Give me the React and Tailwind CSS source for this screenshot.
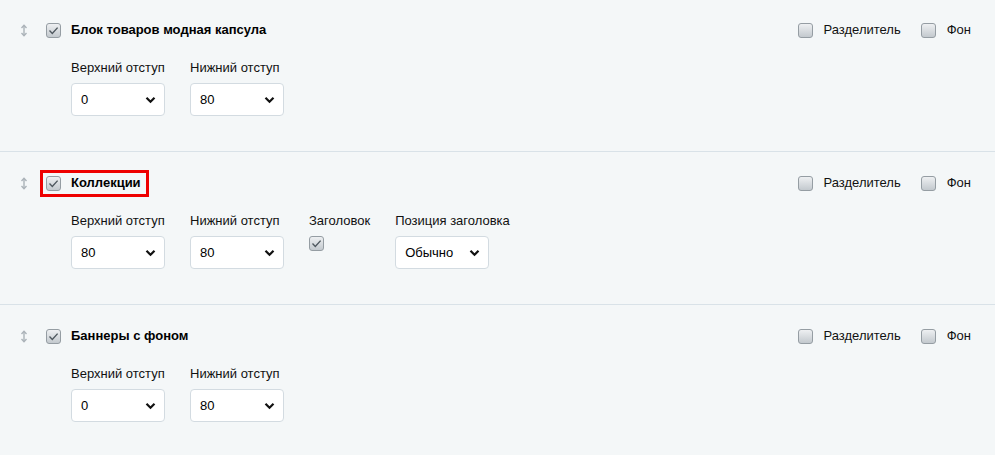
import React from "react";

const blocks = [
  {
    title: "Блок товаров модная капсула",
    top: "0",
    bottom: "80",
  },
  {
    title: "Коллекции",
    top: "80",
    bottom: "80",
    heading: true,
    marked: true,
  },
  {
    title: "Баннеры с фоном",
    top: "0",
    bottom: "80",
  },
];

const DragHandle = () => (
  <svg width="8" height="13" viewBox="0 0 8 13" className="shrink-0">
    <path d="M4 1.5v10" stroke="#aab2b8" strokeWidth="1.4" />
    <path d="M1.5 4L4 1.2 6.5 4" fill="none" stroke="#aab2b8" strokeWidth="1.3" />
    <path d="M1.5 9L4 11.8 6.5 9" fill="none" stroke="#aab2b8" strokeWidth="1.3" />
  </svg>
);

const Box = ({ checked }) => (
  <span className="flex h-[15px] w-[15px] shrink-0 items-center justify-center rounded-[3px] border border-[#959da3] bg-gradient-to-b from-[#eef0f2] to-[#c3c9ce]">
    {checked && (
      <svg width="11" height="9" viewBox="0 0 11 9">
        <path d="M1.5 4.6l2.8 2.8L9.6 1.6" fill="none" stroke="#4f585f" strokeWidth="1.4" />
      </svg>
    )}
  </span>
);

const Select = ({ value }) => (
  <div className="flex h-[33px] w-[94px] items-center justify-between rounded-[4px] border border-[#d3dbe1] bg-white pl-[9px] pr-[8px] text-[13px] text-black">
    <span>{value}</span>
    <svg width="11" height="8" viewBox="0 0 11 8">
      <path d="M1.5 1.8l4 4 4-4" fill="none" stroke="#111" strokeWidth="2.2" />
    </svg>
  </div>
);

const Field = ({ label, children }) => (
  <div className="flex flex-col">
    <span className="mb-[7px] h-[16px] leading-[16px] text-[#111]">{label}</span>
    {children}
  </div>
);

const BlockRow = ({ block, first }) => (
  <div className={`border-b border-[#d9e2e8] pb-[35px] pl-[20px] pr-[24px] ${first ? "pt-[22px]" : "pt-[23px]"}`}>
    <div className="flex h-[16px] items-center justify-between">
      <div className="flex items-center">
        <DragHandle />
        <div className="relative ml-[18px] flex items-center">
          <Box checked />
          <span className="ml-[10px] font-bold text-black">{block.title}</span>
          {block.marked && (
            <span className="absolute -bottom-[6px] -left-[6px] -right-[8px] -top-[5px] border-[3px] border-[#ee0000]" />
          )}
        </div>
      </div>
      <div className="flex items-center">
        <Box />
        <span className="ml-[11px] text-[#111]">Разделитель</span>
        <span className="ml-[20px]">
          <Box />
        </span>
        <span className="ml-[11px] text-[#111]">Фон</span>
      </div>
    </div>
    <div className="mt-[22px] flex gap-[25px] pl-[51px]">
      <Field label="Верхний отступ">
        <Select value={block.top} />
      </Field>
      <Field label="Нижний отступ">
        <Select value={block.bottom} />
      </Field>
      {block.heading && (
        <>
          <Field label="Заголовок">
            <Box checked />
          </Field>
          <Field label="Позиция заголовка">
            <Select value="Обычно" />
          </Field>
        </>
      )}
    </div>
  </div>
);

export default function App() {
  return (
    <div className="h-[455px] w-[995px] overflow-hidden bg-[#f4f7f8] text-[13px] leading-[16px] [font-family:'Liberation_Sans',Arial,sans-serif]">
      {blocks.map((b, i) => (
        <BlockRow key={b.title} block={b} first={i === 0} />
      ))}
    </div>
  );
}
